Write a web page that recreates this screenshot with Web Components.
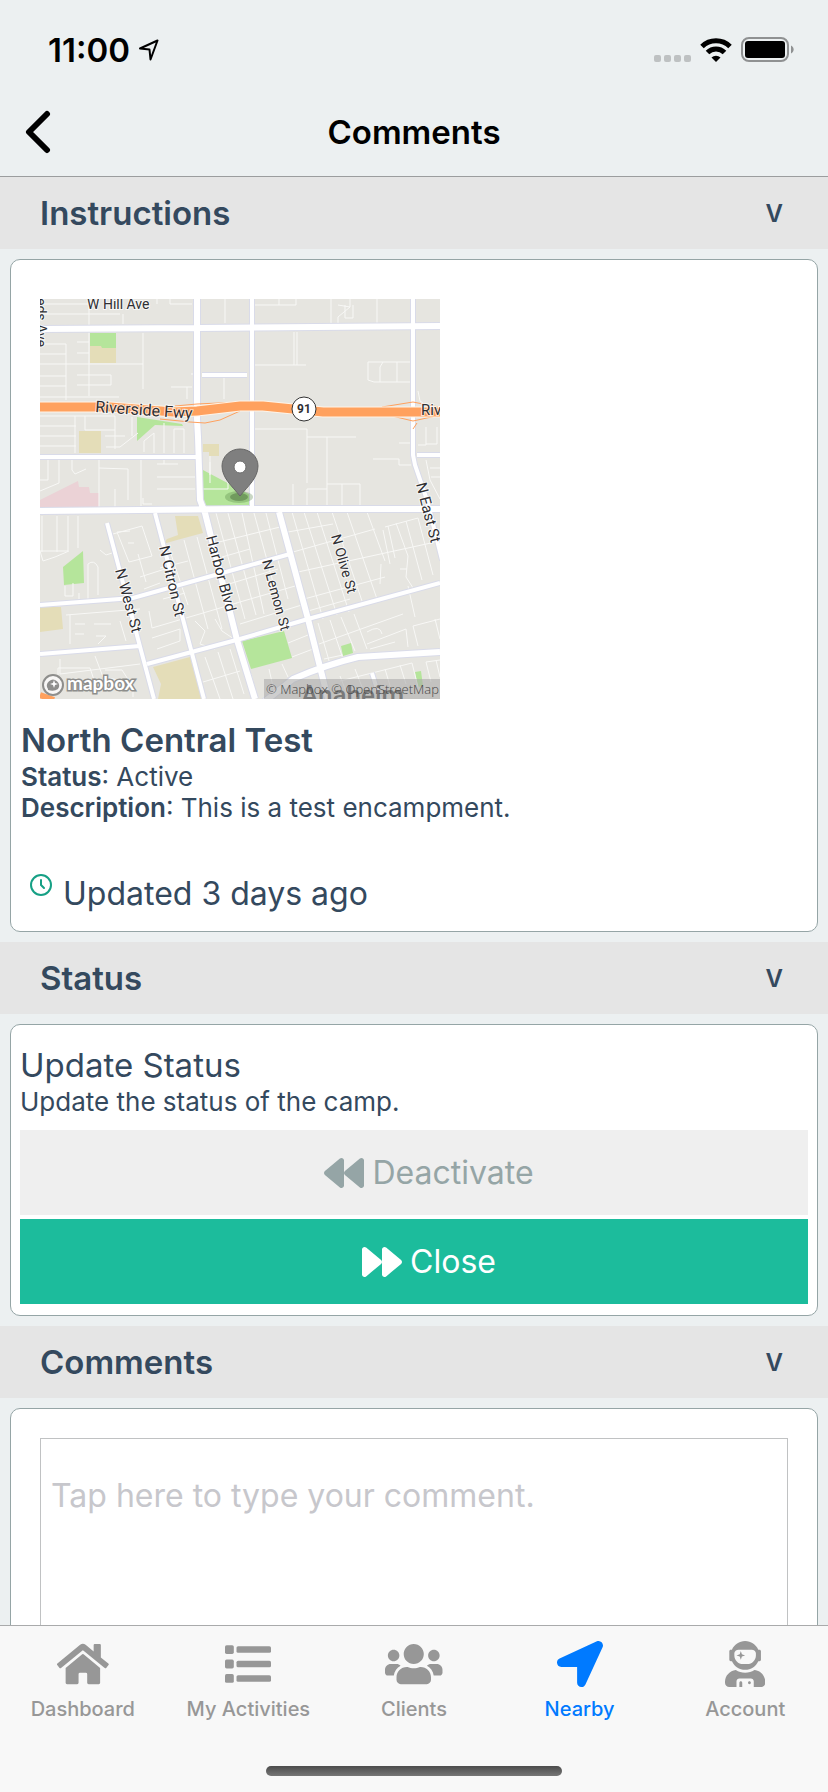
<!DOCTYPE html>
<html lang="en">
<head>
<meta charset="utf-8">
<meta name="viewport" content="width=device-width, initial-scale=1">
<title>Comments</title>
<style>
  html, body {
    margin: 0;
    height: 100%;
  }
  body {
    font-family: Inter, "Liberation Sans", sans-serif;
    color: #34495e;
    background: #ecf0f1;
  }
</style>
</head>
<body>
<camp-app>
  <status-bar slot="top"></status-bar>
  <nav-header slot="top">Comments</nav-header>

  <camp-section heading="Instructions">
    <camp-map></camp-map>
    <camp-info heading="North Central Test" status="Active" description="This is a test encampment."></camp-info>
    <updated-at>Updated 3 days ago</updated-at>
  </camp-section>

  <camp-section heading="Status">
    <status-form heading="Update Status" hint="Update the status of the camp.">
      <action-button icon="backward">Deactivate</action-button>
      <action-button icon="forward" primary>Close</action-button>
    </status-form>
  </camp-section>

  <camp-section heading="Comments">
    <comment-box placeholder="Tap here to type your comment."></comment-box>
  </camp-section>

  <tab-bar slot="bottom">
    <tab-item icon="home">Dashboard</tab-item>
    <tab-item icon="list">My Activities</tab-item>
    <tab-item icon="users">Clients</tab-item>
    <tab-item icon="arrow" active>Nearby</tab-item>
    <tab-item icon="astronaut">Account</tab-item>
  </tab-bar>
</camp-app>

<script>
const ICONS = {
  home: ["0 0 576 512", `<path d="M280.4 148.3L96 300.1V464a16 16 0 0 0 16 16h112a16 16 0 0 0 16-16v-96a16 16 0 0 1 16-16h64a16 16 0 0 1 16 16v96a16 16 0 0 0 16 16h112a16 16 0 0 0 16-16V300L295.7 148.3a12.200 12.200 0 0 0-15.300 0z"/><path d="M571.600 251.500L488 182.600V44a12 12 0 0 0-12-12h-56a12 12 0 0 0-12 12v72.600L318.500 43a48 48 0 0 0-61 0L4.300 251.500a12 12 0 0 0-1.600 16.900l25.500 31A12 12 0 0 0 45.100 301L280.400 107.300a12.200 12.200 0 0 1 15.300 0L530.900 301a12 12 0 0 0 16.900-1.600l25.500-31a12 12 0 0 0-1.700-16.900z"/>`],
  list: ["0 0 512 512", `<rect y="46" width="98" height="98" rx="18"/><rect y="207" width="98" height="98" rx="18"/><rect y="368" width="98" height="98" rx="18"/><rect x="128" y="58" width="384" height="74" rx="18"/><rect x="128" y="219" width="384" height="74" rx="18"/><rect x="128" y="380" width="384" height="74" rx="18"/>`],
  users: ["0 0 640 512", `<path d="M96 224c35.300 0 64-28.700 64-64s-28.700-64-64-64-64 28.700-64 64 28.700 64 64 64zm448 0c35.300 0 64-28.700 64-64s-28.700-64-64-64-64 28.700-64 64 28.700 64 64 64zm32 32h-64c-17.600 0-33.500 7.100-45.100 18.600 40.300 22.100 68.900 62 75.100 109.400h66c17.700 0 32-14.300 32-32v-32c0-35.300-28.700-64-64-64zm-256 0c61.900 0 112-50.100 112-112S381.900 32 320 32 208 82.100 208 144s50.100 112 112 112zm76.800 32h-8.300c-20.800 10-43.900 16-68.500 16s-47.600-6-68.500-16h-8.300C179.600 288 128 339.600 128 403.200V432c0 26.500 21.500 48 48 48h288c26.500 0 48-21.500 48-48v-28.800c0-63.600-51.600-115.200-115.200-115.200zm-223.700-13.400C161.500 263.100 145.600 256 128 256H64c-35.300 0-64 28.700-64 64v32c0 17.700 14.300 32 32 32h65.900c6.300-47.400 34.900-87.300 75.200-109.400z"/>`],
  arrow: ["0 0 512 512", `<path d="M444.500 3.500L28.700 195.400c-48 22.400-32 92.800 19.200 92.800h175.900v175.900c0 51.200 70.400 67.200 92.800 19.200l191.900-415.800c16-38.400-25.600-80-64-64z"/>`],
  astronaut: ["0 0 448 512", `<path d="M64 224h13.500c24.700 56.500 80.900 96 146.500 96s121.800-39.500 146.500-96H384c8.800 0 16-7.200 16-16v-96c0-8.800-7.200-16-16-16h-13.500C345.800 39.500 289.600 0 224 0S102.200 39.500 77.500 96H64c-8.800 0-16 7.200-16 16v96c0 8.800 7.200 16 16 16zm40-88c0-22.100 21.500-40 48-40h144c26.500 0 48 17.900 48 40v24c0 53-43 96-96 96h-48c-53 0-96-43-96-96v-24zm72 72l12-36 36-12-36-12-12-36-12 36-36 12 36 12 12 36zm151.600 113.400C297.700 340.700 262.200 352 224 352s-73.700-11.300-103.600-30.600C52.900 328.500 0 385 0 454.400v9.600c0 26.500 21.500 48 48 48h80v-64c0-17.700 14.300-32 32-32h128c17.700 0 32 14.300 32 32v64h80c26.500 0 48-21.500 48-48v-9.600c0-69.400-52.900-125.900-120.400-133zM272 448c-8.800 0-16 7.200-16 16s7.200 16 16 16 16-7.200 16-16-7.200-16-16-16zm-96 0c-8.800 0-16 7.200-16 16v48h32v-48c0-8.800-7.200-16-16-16z"/>`],
  backward: ["0 0 512 512", `<path d="M11.500 280.600l192 160c20.600 17.200 52.500 2.800 52.500-24.600V96c0-27.400-31.900-41.800-52.500-24.600l-192 160c-15.300 12.800-15.300 36.400 0 49.200zm256 0l192 160c20.600 17.200 52.500 2.800 52.500-24.600V96c0-27.400-31.900-41.800-52.500-24.600l-192 160c-15.300 12.800-15.300 36.400 0 49.200z"/>`],
  forward: ["0 0 512 512", `<path d="M500.500 231.400l-192-160C287.900 54.300 256 68.600 256 96v320c0 27.400 31.900 41.800 52.500 24.600l192-160c15.300-12.800 15.300-36.400 0-49.200zm-256 0l-192-160C31.900 54.300 0 68.600 0 96v320c0 27.400 31.900 41.800 52.500 24.600l192-160c15.300-12.800 15.300-36.400 0-49.200z"/>`]
}

const icon = (name) => {
  const [viewBox, shapes] = ICONS[name]
  return `<svg class="icon" viewBox="${viewBox}" fill="currentColor" aria-hidden="true">${shapes}</svg>`
}

class BaseElement extends HTMLElement {
  constructor() {
    super();
    this.attachShadow({ mode: 'open' });
  }

  connectedCallback() {
    this.shadowRoot.innerHTML = `<style>${this.constructor.style}</style>${this.render()}`;
  }
}

/*App shell */
class CampApp extends BaseElement {
  static get style() {
    return /*css*/ `
    :host {
      display: flex;
      flex-direction: column;
      height: 100vh;
    }
    main {
      flex: 1 1 0;
      min-height: 0;
      overflow-y: auto;
      scrollbar-width: none;
    }
    `;
  }

  render(){
    return /*html*/ `
      <slot name="top"></slot>
      <main><slot></slot></main>
      <slot name="bottom"></slot>
    `;
  }
}
window.customElements.define("camp-app", CampApp);

/*Clock, signal, wifi and battery */
class StatusBar extends BaseElement {
  static get style() {
    return /*css*/ `
    :host {
      display: flex;
      align-items: center;
      justify-content: space-between;
      box-sizing: border-box;
      height: 88px;
      padding: 11px 34px 0 48px;
      color: #000;
      font-size: 33px;
      font-weight: 600;
    }
    div {
      display: flex;
      align-items: center;
      gap: 9px;
    }
    svg {
      display: block;
    }
    `;
  }

  render(){
    return /*html*/ `
      <div>
        <span>11:00</span>
        <svg width="20" height="22" viewBox="0 0 20 22" fill="none" stroke="#000" stroke-width="2" stroke-linejoin="round" aria-hidden="true"><path d="M1 9.500L18.500 1.500L11.500 20.500L10.500 10.500Z"/></svg>
      </div>
      <div>
        <svg width="37" height="24" viewBox="0 0 37 24" fill="#bec1c2" aria-hidden="true"><rect y="17" width="7" height="7" rx="2"/><rect x="10" y="17" width="7" height="7" rx="2"/><rect x="20" y="17" width="7" height="7" rx="2"/><rect x="30" y="17" width="7" height="7" rx="2"/></svg>
        <svg width="32" height="24" viewBox="0 0 32 24" fill="none" stroke="#000" stroke-width="5" aria-hidden="true"><path d="M2 8.500A20 20 0 0 1 30 8.500"/><path d="M7.500 14.500A12 12 0 0 1 24.500 14.500"/><path d="M16 24L11.500 19.500A6.500 6.500 0 0 1 20.500 19.500Z" fill="#000" stroke="none"/></svg>
        <svg width="53" height="25" viewBox="0 0 53 25" aria-hidden="true"><rect x="1" y="1" width="46" height="23" rx="7" fill="none" stroke="#8f9192" stroke-width="2"/><rect x="4" y="4" width="40" height="17" rx="3"/><path d="M50 8.500C53.500 10 53.500 15 50 16.500Z" fill="#8f9192"/></svg>
      </div>
    `;
  }
}
window.customElements.define("status-bar", StatusBar);

/*Title row with back button */
class NavHeader extends BaseElement {
  static get style() {
    return /*css*/ `
    :host {
      display: grid;
      grid-template-columns: 80px 1fr 80px;
      align-items: center;
      height: 88px;
      border-bottom: 1px solid #9b9d9e;
      color: #000;
    }
    button {
      width: 80px;
      height: 88px;
      padding: 0 0 0 25px;
      border: 0;
      background: none;
      cursor: pointer;
    }
    svg {
      display: block;
    }
    h1 {
      margin: 0;
      font-size: 33px;
      font-weight: 600;
      text-align: center;
    }
    `;
  }

  render(){
    return /*html*/ `
      <button aria-label="Back">
        <svg width="26" height="44" viewBox="0 0 26 44" fill="none" stroke="#000" stroke-width="6" stroke-linecap="round" stroke-linejoin="round"><path d="M22 4L4 22L22 40"/></svg>
      </button>
      <h1><slot></slot></h1>
    `;
  }
}
window.customElements.define("nav-header", NavHeader);

/*Collapsible section: grey bar + card */
class CampSection extends BaseElement {
  static get style() {
    return /*css*/ `
    :host {
      display: block;
    }
    h2 {
      margin: 0;
    }
    button {
      display: flex;
      align-items: center;
      justify-content: space-between;
      width: 100%;
      height: 72px;
      padding: 0 45px 0 40px;
      border: 0;
      background: #e5e5e5;
      color: inherit;
      font: inherit;
      font-size: 33px;
      font-weight: 600;
      cursor: pointer;
    }
    .chevron {
      font-size: 24px;
    }
    .card {
      margin: 10px;
      padding: 0 9px;
      background: #fff;
      border: 1px solid #95a5a6;
      border-radius: 10px;
    }
    .card[hidden] {
      display: none;
    }
    `;
  }

  connectedCallback() {
    super.connectedCallback();
    this.$button = this.shadowRoot.querySelector("button");
    this.$card = this.shadowRoot.querySelector(".card");
    this.$button.addEventListener("click", this.handleToggle);
  }

  handleToggle = () => {
    this.$card.hidden = !this.$card.hidden;
    this.$button.setAttribute("aria-expanded", String(!this.$card.hidden));
  };

  render(){
    return /*html*/ `
      <h2><button aria-expanded="true"><span>${this.getAttribute("heading")}</span><span class="chevron">V</span></button></h2>
      <div class="card"><slot></slot></div>
    `;
  }
}
window.customElements.define("camp-section", CampSection);

/*Static street map */
class CampMap extends BaseElement {
  static get style() {
    return /*css*/ `
    :host {
      display: block;
      padding: 39px 20px 0;
    }
    svg {
      display: block;
      width: 400px;
      max-width: 100%;
    }
    text {
      font-family: Roboto, sans-serif;
      fill: #2f2f33;
    }
    .label {
      font-size: 15px;
      stroke: #fff;
      stroke-opacity: 0.7;
      stroke-width: 2px;
      paint-order: stroke;
    }
    .small {
      font-size: 14px;
    }
    .large {
      font-size: 16px;
    }
    .attribution {
      font-family: "Open Sans", sans-serif;
      font-size: 13px;
      font-weight: 300;
      fill: #444;
    }
    .brand {
      font-family: Lato, sans-serif;
      font-size: 19px;
      font-weight: 700;
      fill: #fff;
      stroke: #8e8e8c;
      stroke-width: 3px;
      paint-order: stroke;
    }
    `;
  }

  render(){
    const freeway = "M0 108H70L133 113L157 112L200 107L223 107L253 110L283 113L400 113"
    return /*html*/ `
    <svg viewBox="0 0 400 400" role="img" aria-label="Map of North Central Test">
      <defs>
        <g id="wide" fill="none">
          <path d="M0 30L157 29L400 27M157 0V120L158 138L160 201L165 214L197 341L215 400M0 212L200 210H400M239 213L268 320L288 400M223 404L253 380Q285 366 318 358L400 353"/>
        </g>
        <g id="narrow" fill="none">
          <path d="M212 0V207M373 0V156L375 166L387 201L402 261M162 76H207M0 158H157M377 156H400M67 224L114 400M115 214L164 400M0 306L93 299L200 269L250 255M0 355L100 347M107 365L200 340L268 320L400 284M332 374L340 400"/>
        </g>
      </defs>
      <rect width="400" height="400" fill="#e6e5e0"/>
      <g fill="#b5e59b">
        <path d="M50 34H76V49H50ZM97 118L142 125L143 127L115 126L97 142ZM163 171L212 197V208H163ZM23 268L43 252L44 284L24 286ZM202 342L244 332L252 359L211 370ZM301 347L311 344L313 354L303 357ZM375 373L381 372L383 387L378 388Z"/>
      </g>
      <g fill="#e4ddb8">
        <path d="M50 47H61L62 49H76V64H50ZM39 132H61V154H39ZM163 145H179V157H169V153H163ZM0 308H21L23 330L0 333ZM135 217H158L163 234L137 241L123 245L127 240L138 236ZM113 368L150 358L162 400H118L121 385Z"/>
      </g>
      <path d="M0 201L38 182L39 188H49L50 194H59V209H0Z" fill="#ebd2d6"/>
      <g fill="none" stroke="#f8f8f6" stroke-width="1">
        <path d="M0 5H60M49 0V97M0 15H80M83 15V25M117 0V5M130 0V5H152M0 45H26V101M0 55H26M0 65H103M0 77H26M0 87H26M37 43H49M37 54H49M103 34V90M37 76H71V86H37M0 98H79M131 88H152M147 88V100M151 75H153"/>
        <path d="M185 0V24M184 79V100M0 117H75V150M0 127H36M0 137H36M0 147H36M35 117V154M45 117V131H75M65 137H85M66 148H80L98 134M92 118V137M104 153V142L114 134V154M124 124V154M134 154V130H144V154M8 161V181H0M19 161V184L0 192M32 161V171L35 175L46 170M59 161V210M59 169L88 170V201M101 161V210M117 165H138M124 161V165M117 178H155M117 190H155M75 190V210M103 199V205H112"/>
        <path d="M215 6H256V0M239 0V6M291 0V24M298 6L310 8V0M310 8L298 18V24M313 6V19H305V6M337 0V24M215 66H266M254 33V66M257 33V66M328 63H371M328 63V81L334 83H371M340 83V68L343 63M357 63V83M215 130H267V184M267 138H316M287 138V208M267 208V190H287M287 185H320V208M302 185V208M253 185V208M333 160H359V166H371M359 144H371M378 92L380 102L383 104M386 128V146H378M397 128V145H386M386 161L390 181L400 200M390 169H400M391 178H400M170 157V184M188 157V190H163M170 163V176"/>
        <path d="M2 217V253M17 217V253M28 217V252H0L3 262L15 258L29 252M38 217V249M60 251L66 256L72 254M48 300V265Q54 260 58 268V296M25 287V297H33V284M39 300V294M73 235L102 227L112 257L89 263L77 233L90 232M88 244H94M26 316L100 310M30 316V345M35 325H45M35 335H44M54 325H71M56 337H66L58 345M80 322L86 342M20 360V375L100 365M55 357L63 378L93 384M65 371H82L93 388V398M18 378V369H50L57 390M100 278L125 270M104 290L120 284M98 255L106 283"/>
        <path d="M128 246L148 306M144 241L168 330M157 238L182 330M176 214L205 320M188 214L216 316M202 214L224 315M214 214L241 312M226 214L248 300M175 244L240 228M182 258L210 250M189 285L238 270M193 305L262 285M200 325L265 305M120 269L148 262M123 300L145 294M109 312L112 329L197 304M117 350L140 342V330L112 339M155 322L165 332L160 345L175 350M175 320L182 332L194 340M165 358L180 400M178 353L193 400M190 350L204 395M163 383L200 372"/>
        <path d="M252 213L283 320M264 213L297 316M277 213L309 313M292 213L323 305M307 213L338 303M327 213L345 262M343 231L350 265M248 233L293 225M253 253L335 230M258 273L400 242M264 300L345 278M268 312L310 300M345 228L378 219M348 227L355 259M356 224L368 257L366 278L375 292M366 222L382 281M378 219L393 276M341 265L340 285M360 270H367M278 324L290 365M290 321L303 360M301 318L315 352M314 315L327 350M279 345L363 315M284 360L303 356M327 333Q340 325 342 335M327 345L366 330L368 348M330 350L355 343M373 327L378 347M395 320L400 340M373 327L400 320M368 287L375 318M248 344L268 336M252 358L273 350M211 375L217 398M229 370L234 392M242 365L248 378M300 377L307 395M315 370L322 388M300 382L372 364L378 388M345 370L351 390M360 366L366 385M386 363L400 361M386 363L391 383M396 361L400 378"/>
      </g>
      <use href="#wide" stroke="#d9dbe9" stroke-width="8"/>
      <use href="#narrow" stroke="#d9dbe9" stroke-width="6"/>
      <use href="#wide" stroke="#fff" stroke-width="6"/>
      <use href="#narrow" stroke="#fff" stroke-width="4"/>
      <g fill="none" stroke="#ffa15e">
        <path d="M120 120L150 123L165 124L180 121L200 112M135 107L157 105L200 103M342 108L373 103L398 108M352 117L373 122L396 117M377 124L373 130" stroke-width="1"/>
        <path d="${freeway}" stroke="#fff3e6" stroke-width="11"/>
        <path d="${freeway}" stroke-width="9"/>
        <path d="M0 396L14 401" stroke-width="6"/>
      </g>
      <g class="label">
        <text class="small" x="47" y="10">W Hill Ave</text>
        <text class="large" transform="translate(55 113) rotate(4)">Riverside Fwy</text>
        <text x="381" y="116">Riv</text>
        <text transform="translate(75 271) rotate(75)">N West St</text>
        <text transform="translate(119 248) rotate(77)">N Citron St</text>
        <text transform="translate(166 238) rotate(75)">Harbor Blvd</text>
        <text class="small" transform="translate(222 262) rotate(75)">N Lemon St</text>
        <text class="small" transform="translate(291 237) rotate(74)">N Olive St</text>
        <text transform="translate(376 185) rotate(76)">N East St</text>
        <text class="small" transform="translate(-4 -1) rotate(90)">eds Ave</text>
      </g>
      <circle cx="264" cy="110" r="12" fill="#fff" stroke="#333" stroke-width="1"/>
      <text x="264" y="114" text-anchor="middle" font-size="12" font-weight="700">91</text>
      <ellipse cx="199" cy="198" rx="14" ry="6" fill="#4d7a3a" opacity="0.3"/>
      <ellipse cx="199" cy="198" rx="9" ry="4" fill="#3c5c30" opacity="0.4"/>
      <path d="M200 197C192 187 182 179 182 167A18 17 0 0 1 218 167C218 179 208 187 200 197Z" fill="#7f7f7f" stroke="#666" stroke-width="1"/>
      <circle cx="200" cy="168" r="6" fill="#fff" stroke="#6d6d6d" stroke-width="1"/>
      <text x="261" y="405" font-size="26" font-weight="500" style="fill:#444">Anaheim</text>
      <rect x="224" y="380" width="176" height="20" fill="#a5a5a5" opacity="0.55"/>
      <text class="attribution" x="226" y="395">© Mapbox © OpenStreetMap</text>
      <circle cx="13" cy="386" r="10" fill="#fff" fill-opacity="0.7" stroke="#8e8e8c" stroke-width="2"/>
      <path d="M8 390A6 6 0 1 1 18 390Q14 393 8 391Z" fill="#8e8e8c"/>
      <path d="M14 381L15 384L18 385L15 386L14 389L13 386L10 385L13 384Z" fill="#fff"/>
      <text class="brand" x="27" y="391">mapbox</text>
    </svg>
    `;
  }
}
window.customElements.define("camp-map", CampMap);

/*Camp name, status and description */
class CampInfo extends BaseElement {
  static get style() {
    return /*css*/ `
    :host {
      display: block;
      padding: 20px 1px 0;
      font-size: 26px;
      line-height: 31px;
    }
    h3 {
      margin: 0;
      font-size: 33px;
      font-weight: 600;
      line-height: 42px;
    }
    p {
      margin: 0;
    }
    b {
      font-weight: 600;
    }
    `;
  }

  render(){
    return /*html*/ `
      <h3>${this.getAttribute("heading")}</h3>
      <p><b>Status</b>: ${this.getAttribute("status")}</p>
      <p><b>Description</b>: ${this.getAttribute("description")}</p>
    `;
  }
}
window.customElements.define("camp-info", CampInfo);

class UpdatedAt extends BaseElement {
  static get style() {
    return /*css*/ `
    :host {
      display: flex;
      align-items: flex-start;
      gap: 10px;
      padding: 50px 9px 16px;
      font-size: 32px;
      line-height: 42px;
    }
    `;
  }

  render(){
    return /*html*/ `
      <svg width="24" height="24" viewBox="0 0 24 24" fill="none" stroke="#16a085" stroke-width="2" stroke-linecap="round" stroke-linejoin="round" aria-hidden="true"><circle cx="12" cy="12" r="10"/><path d="M12 7V12L15 15"/></svg>
      <span><slot></slot></span>
    `;
  }
}
window.customElements.define("updated-at", UpdatedAt);

/*Status update form */
class StatusForm extends BaseElement {
  static get style() {
    return /*css*/ `
    :host {
      display: block;
      padding: 19px 0 11px;
    }
    h3 {
      margin: 0;
      font-size: 33px;
      font-weight: 400;
      line-height: 42px;
    }
    p {
      margin: 0 0 13px;
      font-size: 26px;
      line-height: 31px;
    }
    .actions {
      display: grid;
      gap: 4px;
    }
    `;
  }

  render(){
    return /*html*/ `
      <h3>${this.getAttribute("heading")}</h3>
      <p>${this.getAttribute("hint")}</p>
      <div class="actions"><slot></slot></div>
    `;
  }
}
window.customElements.define("status-form", StatusForm);

class ActionButton extends BaseElement {
  static get style() {
    return /*css*/ `
    :host {
      display: block;
      --bg-color: #efefef;
      --text-color: #95a5a6;
    }
    :host([primary]) {
      --bg-color: #1cbc9c;
      --text-color: #fff;
    }
    button {
      display: flex;
      align-items: center;
      justify-content: center;
      gap: 8px;
      width: 100%;
      height: 85px;
      padding: 0 0 0 30px;
      border: 0;
      background: var(--bg-color);
      color: var(--text-color);
      font: inherit;
      font-size: 32px;
      cursor: pointer;
    }
    .icon {
      height: 40px;
    }
    `;
  }

  render(){
    return /*html*/ `<button>${icon(this.getAttribute("icon"))}<span><slot></slot></span></button>`;
  }
}
window.customElements.define("action-button", ActionButton);

/*New comment text box */
class CommentBox extends BaseElement {
  static get style() {
    return /*css*/ `
    :host {
      display: block;
      padding: 29px 20px;
    }
    textarea {
      display: block;
      box-sizing: border-box;
      width: 100%;
      height: 300px;
      padding: 37px 10px;
      border: 1px solid #c0c2c3;
      border-radius: 0;
      background: none;
      color: inherit;
      font: inherit;
      font-size: 32px;
      line-height: 40px;
      resize: none;
    }
    textarea::placeholder {
      color: #c7c7cc;
    }
    `;
  }

  render(){
    const placeholder = this.getAttribute("placeholder")
    return /*html*/ `<textarea aria-label="Comment" placeholder="${placeholder}"></textarea>`;
  }
}
window.customElements.define("comment-box", CommentBox);

/*Bottom tabs */
class TabBar extends BaseElement {
  static get style() {
    return /*css*/ `
    :host {
      display: flex;
      flex-direction: column;
      justify-content: space-between;
      box-sizing: border-box;
      height: 167px;
      padding-bottom: 16px;
      border-top: 1px solid #a9aaab;
      background: #f8f8f8;
    }
    nav {
      display: grid;
      grid-template-columns: repeat(5, 1fr);
    }
    .indicator {
      align-self: center;
      width: 296px;
      height: 10px;
      border-radius: 5px;
      background: linear-gradient(#4c4c4c, #767676);
    }
    `;
  }

  render(){
    return /*html*/ `
      <nav><slot></slot></nav>
      <div class="indicator"></div>
    `;
  }
}
window.customElements.define("tab-bar", TabBar);

class TabItem extends BaseElement {
  static get style() {
    return /*css*/ `
    :host {
      display: block;
      color: #979797;
    }
    :host([active]) {
      color: #007aff;
    }
    a {
      display: flex;
      flex-direction: column;
      align-items: center;
      gap: 8px;
      padding-top: 15px;
      color: inherit;
      font-size: 20px;
      font-weight: 500;
      line-height: 28px;
      text-decoration: none;
      white-space: nowrap;
    }
    .icon {
      height: 46px;
    }
    `;
  }

  render(){
    const current = this.hasAttribute("active") ? `aria-current="page"` : ""
    return /*html*/ `<a href="#" ${current}>${icon(this.getAttribute("icon"))}<slot></slot></a>`;
  }
}
window.customElements.define("tab-item", TabItem);
</script>
</body>
</html>
